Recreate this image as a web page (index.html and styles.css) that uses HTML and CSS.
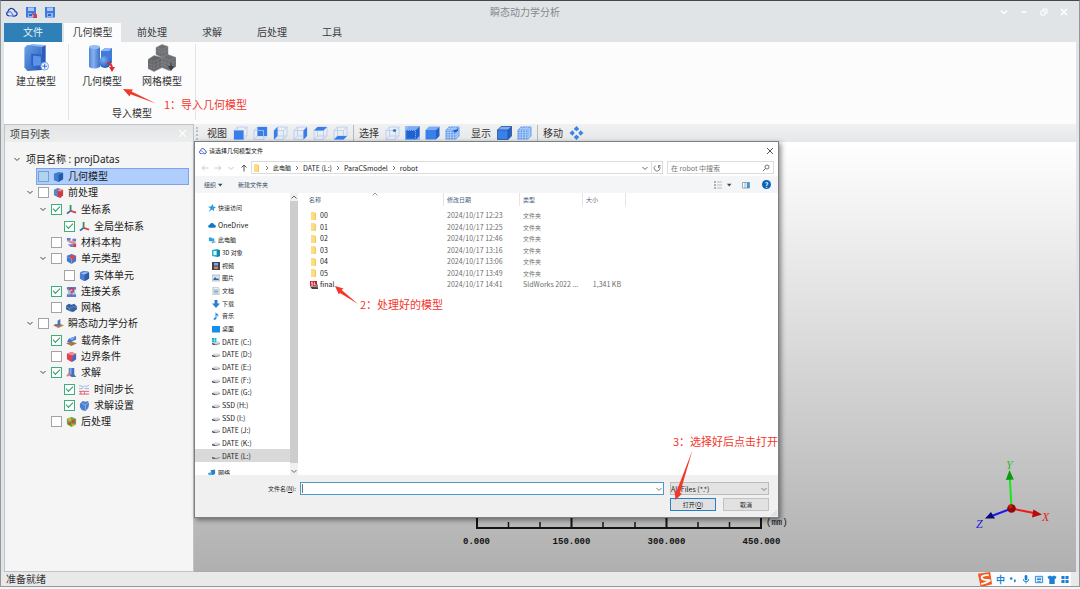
FILE: index.html
```html
<!DOCTYPE html>
<html lang="zh-CN">
<head>
<meta charset="utf-8">
<title>瞬态动力学分析</title>
<link rel="stylesheet" href="styles.css">
</head>
<body>
<svg class="sprite" aria-hidden="true">
  <defs>
    <linearGradient id="g-blue" x1="0" y1="0" x2="1" y2="1"><stop offset="0" stop-color="#6ea2ea"/><stop offset="1" stop-color="#2257b8"/></linearGradient>
    <linearGradient id="g-cyl" x1="0" x2="1" y1="0" y2="0"><stop offset="0" stop-color="#4d86dc"/><stop offset=".4" stop-color="#86b1f0"/><stop offset="1" stop-color="#3a70c8"/></linearGradient>
    <radialGradient id="g-ball" cx=".35" cy=".3" r=".8"><stop offset="0" stop-color="#7db0f5"/><stop offset="1" stop-color="#1c4fae"/></radialGradient>
  </defs>
  <symbol id="cloud" viewBox="0 0 12 11"><path d="M3 9.400C.2 9-.1 5.900 2 5.300 2.200 2.300 6 .6 8 3.200M6.500 9.500H8.800C11.800 9 11.800 5.500 9.200 5.200 9 4 8.500 3 7 2.600" fill="none" stroke="#2a3db0" stroke-width="1.300"/><path d="M2.500 6Q4.500 4 6 7T9 9M3 9.300H7" fill="none" stroke="#5b8bea" stroke-width="1.300"/></symbol>
  <symbol id="disk" viewBox="0 0 12 12"><path d="M1 1h10v10.500H1z" fill="#3f7bdc"/><path d="M3 1.500h6v3.500H3z" fill="#a9c8f6"/><path d="M3 7h6v4H3z" fill="#8db4f2"/><path d="M4 8h3v2H4z" fill="#2f66c6"/></symbol>
  <symbol id="disk-as" viewBox="0 0 12 12"><use href="#disk"/><path d="M7 7l4 4M11.300 8V11.300H8" fill="none" stroke="#e0353b" stroke-width="1.300"/></symbol>
  <symbol id="chev" viewBox="0 0 8 8"><path d="M1.500 3L4 5.500 6.500 3" fill="none" stroke="currentColor"/></symbol>
  <symbol id="chev-r" viewBox="0 0 8 8"><path d="M3 2L5 4 3 6" fill="none" stroke="currentColor" stroke-width=".9"/></symbol>
  <symbol id="chev-u" viewBox="0 0 8 8"><path d="M1.500 5.500L4 3 6.500 5.500" fill="none" stroke="currentColor"/></symbol>
  <symbol id="tri" viewBox="0 0 8 8"><path d="M2 2.800h4.500L4.200 5.500z" fill="currentColor"/></symbol>
  <symbol id="cross" viewBox="0 0 8 8"><path d="M1 1l6 6M7 1L1 7" fill="none" stroke="currentColor"/></symbol>
  <symbol id="build" viewBox="0 0 26 29"><path d="M3 2L9 0l13 1-4 3z" fill="#8db6f2"/><path d="M1 4L4 1l15 2v24L4 28 1 24z" fill="url(#g-blue)"/><path d="M19 3l4-2v21l-4 5z" fill="#2a5dbb"/><path d="M8 10l11 1v12l-9 1-2-3z" fill="#2c62c6"/><path d="M10 12l8 1v9l-8 1z" fill="#5b93e6"/><circle cx="22" cy="23" r="4" fill="#f3f8ff" stroke="#6c9be0"/><path d="M19.500 23h5M22 20.500v5" stroke="#2b66cf"/></symbol>
  <symbol id="geom" viewBox="0 0 26 28"><path d="M0 3v20q5 3 11 0V3z" fill="url(#g-cyl)"/><ellipse cx="5.500" cy="3" rx="5.500" ry="2" fill="#94bbf3"/><path d="M12 7l4-3h7v15l-3 2h-8z" fill="#3f7bda"/><path d="M12 7l4-3h7l-3 3z" fill="#8eb7f3"/><circle cx="16" cy="18" r="6" fill="url(#g-ball)"/><path d="M18 19q5 0 5 6" fill="none" stroke="#e02a32" stroke-width="2"/><path d="M20 23h6l-3 5z" fill="#e02a32"/></symbol>
  <symbol id="mesh" viewBox="0 0 28 27"><g stroke="#8b8d90" stroke-width=".5"><path d="M8 3l6-3 6 2v9l-6 2-6-3z" fill="#6b6d70"/><path d="M0 15l6-4 8 2v10l-8 4-6-3z" fill="#626467"/><path d="M14 13l6-3 8 3v9l-7 4-7-3z" fill="#6b6d70"/><path d="M8 3l6 2 6-3M14 5v8M0 15l6 2 8-4M6 17v10M14 13l7 3 7-3M21 16v10M11 4v8M17 4v8M8 6l6 2 6-2M3 16v9M10 15v10M0 19l6 2 8-4M0 22l6 2 8-4M17 15v9M24 15v9M14 17l7 3 7-3M14 20l7 3 7-3" fill="none"/></g><path d="M23 18v5M20.500 22h5L23 26z" fill="#3e4043" stroke="#3e4043"/></symbol>
  <symbol id="wire" viewBox="0 0 15 14"><path d="M1 4.500h9.500v9H1zM4.500 1h9.500v9H4.500zM1 4.500L4.500 1M10.500 4.500L14 1M10.500 13.500L14 10M1 13.500L4.500 10" fill="none" stroke="#b4cff6" stroke-width=".9"/></symbol>
  <symbol id="v-front" viewBox="0 0 15 14"><use href="#wire"/><path d="M1 4.500h9.500v9H1z" fill="#397de9"/></symbol>
  <symbol id="v-back" viewBox="0 0 15 14"><use href="#wire"/><path d="M4.500 1H14v9H4.500z" fill="#397de9"/><path d="M4.500 4.500h6V10" fill="none" stroke="#a9c8f6" stroke-width=".8"/></symbol>
  <symbol id="v-left" viewBox="0 0 15 14"><use href="#wire"/><path d="M1 4.500L4.500 1v9L1 13.500z" fill="#397de9"/></symbol>
  <symbol id="v-right" viewBox="0 0 15 14"><use href="#wire"/><path d="M10.500 4.500L14 1v9l-3.500 3.500z" fill="#397de9"/></symbol>
  <symbol id="v-top" viewBox="0 0 15 14"><use href="#wire"/><path d="M1 4.500L4.500 1H14l-3.500 3.500z" fill="#397de9"/></symbol>
  <symbol id="v-bottom" viewBox="0 0 15 14"><use href="#wire"/><path d="M1 13.500L4.500 10H14l-3.500 3.500z" fill="#397de9"/></symbol>
  <symbol id="s-point" viewBox="0 0 15 14"><use href="#wire"/><circle cx="9.500" cy="4.500" r="1.600" fill="#2f74e4"/></symbol>
  <symbol id="solid" viewBox="0 0 15 14"><path d="M.5 4L4 .5h10.500L11 4z" fill="#7daef5"/><path d="M.5 4H11v9.500H.5z" fill="#3b7fea"/><path d="M11 4L14.500.5V10L11 13.500z" fill="#2362cb"/></symbol>
  <symbol id="s-edge" viewBox="0 0 15 14"><use href="#solid"/><path d="M1 4.500h9.500V13H1z" fill="#1f62cf" stroke="#9cc3fa" stroke-width=".7" stroke-dasharray="1 1"/></symbol>
  <symbol id="s-body" viewBox="0 0 15 14"><use href="#solid"/><path d="M.5 4L4 .5h10.500V10L11 13.500H.5zM.5 4H11v9.500M11 4L14.500.5" fill="none" stroke="#235196" stroke-width=".8"/></symbol>
  <symbol id="s-mesh" viewBox="0 0 15 14"><path d="M.5 4L4 .5h10.500V10L11 13.500H.5z" fill="#5e98ef"/><path d="M.5 4H11v9.500M11 4L14.500.5M3 4v9.500M5.700 4v9.500M8.400 4v9.500M.5 6.400H11L14.500 3M.5 8.800H11l3.500-3.400M.5 11.200H11l3.500-3.400M2.500 2.300h10M3 4l3-3.500M6 4l3-3.500M8.500 4l3-3.500M12.700 2.300v9.500" fill="none" stroke="#d5e5fc" stroke-width=".6"/></symbol>
  <symbol id="s-cell" viewBox="0 0 15 14"><use href="#s-mesh"/><path d="M8.400 4H11v2.400H8.400z" fill="#1c5fd0"/><path d="M11 4l2-2v2.400l-2 2z" fill="#1c5fd0"/></symbol>
  <symbol id="move" viewBox="0 0 14 14"><g fill="#3b82ea"><path d="M7 0l2.800 3L7 5.200 4.200 3zM7 14l2.800-3L7 8.800 4.200 11zM0 7l3-2.800L5.200 7 3 9.800zM14 7l-3-2.800L8.800 7 11 9.800z"/></g></symbol>
  <symbol id="t-box" viewBox="0 0 12 12"><path d="M1 3l5-2 5 1v7l-5 3-5-2z" fill="#3f7fd0"/><path d="M6 4l5-2v7l-5 3z" fill="#245ba8"/></symbol>
  <symbol id="t-pre" viewBox="0 0 12 12"><path d="M1 3l4-2 3 1v8l-3 1-4-2z" fill="#5d85c9"/><path d="M5 4l6-1v6l-3 3-3-1z" fill="#d13a4a"/><path d="M5 4l3-2 3 1-3 2z" fill="#ee8f97"/></symbol>
  <symbol id="t-axis" viewBox="0 0 12 12"><path d="M5 7.500V1" stroke="#2c9c57" stroke-width="2"/><path d="M5 7.500l6 2" stroke="#d5434b" stroke-width="2"/><path d="M5 7.500L1 10.500" stroke="#3b65bc" stroke-width="2"/></symbol>
  <symbol id="t-mat" viewBox="0 0 12 12"><path d="M1 1h4v3H1zM7 2h4v3H7z" fill="#5d7fca"/><path d="M1 5l5-1 5 2-4 2z" fill="#e98b95"/><path d="M2 8h8v3H5z" fill="#5c88d6"/><path d="M8 7h3v4H8z" fill="#d13f50"/></symbol>
  <symbol id="t-elem" viewBox="0 0 12 12"><path d="M1 3l5-2 5 2v6l-5 3-5-3z" fill="#4579c8"/><path d="M4 3l4-1 2 3-4 4z" fill="#d94558"/><path d="M1 4l5 2v6" fill="none" stroke="#8fb5ec" stroke-width=".6"/></symbol>
  <symbol id="t-solid" viewBox="0 0 12 12"><path d="M1 4q0-3 5-3t5 2v6q-2 3-5 3t-5-3z" fill="#4c7fd2"/><path d="M6 4l5-1v6q-2 2-5 3z" fill="#2d5cab"/><path d="M2 4q4-3 8-1L6 5z" fill="#9abfee"/></symbol>
  <symbol id="t-link" viewBox="0 0 12 12"><path d="M1 1h10v3H1zM1 9h10v3H1z" fill="#567fc7"/><path d="M2 4h8v5H2z" fill="#a2b9e0"/><path d="M4 4.500q0-2 2-2t2 2-2 2V8M6 9v1" fill="none" stroke="#d2334a" stroke-width="1.500"/></symbol>
  <symbol id="t-net" viewBox="0 0 12 12"><path d="M0 4l3-2 3 1 3-1 3 3v3l-4 3-4-1-4-2z" fill="#35639f"/><path d="M0 5l4 2 4-2 4 1M4 7v3" fill="none" stroke="#86aadd" stroke-width=".6"/></symbol>
  <symbol id="t-dyn" viewBox="0 0 12 12"><path d="M0 8l6-2 6 2-6 3z" fill="#b7823e"/><path d="M5 8V3l3-2v6z" fill="#4774c0"/><path d="M2 7q2 2 6 0" fill="none" stroke="#4774c0" stroke-width="1.500"/></symbol>
  <symbol id="t-load" viewBox="0 0 12 12"><path d="M0 9l6-2 6 2-6 3z" fill="#a87938"/><path d="M1 8l2-4 8-3v4L5 8z" fill="#3d74cd"/><path d="M3 4l8-3-4 5z" fill="#7da8e8"/></symbol>
  <symbol id="t-bound" viewBox="0 0 12 12"><path d="M1 3l5-2 5 2v6l-5 3-5-3z" fill="#df4053"/><path d="M7 5l4-2v6l-4 3z" fill="#3e6dbd"/><path d="M1 3l5-2 5 2-4 2z" fill="#f08a95"/></symbol>
  <symbol id="t-solve" viewBox="0 0 12 12"><path d="M3 1h6v7l2 3H6L3 8z" fill="#466fbf"/><path d="M4 1h2v7H4z" fill="#8badde"/><path d="M0 10l3-4 2 4z" fill="#e2848e"/></symbol>
  <symbol id="t-time" viewBox="0 0 12 12"><path d="M0 2h3l1 2 2-2 2 1 3-2M0 5h4M6 5h5" fill="none" stroke="#8fabdf" stroke-width=".9"/><path d="M0 8h11M0 11h11M2 8v3M6 9v2" fill="none" stroke="#e0525e"/></symbol>
  <symbol id="t-set" viewBox="0 0 12 12"><path d="M1 4l3-3 3 1 3-1 1 4-1 4-3 3-4-1-2-3z" fill="#4a80cf"/><path d="M3 4l4 1 3-2M7 5v6" fill="none" stroke="#a4c4ef" stroke-width=".7"/></symbol>
  <symbol id="t-post" viewBox="0 0 12 12"><path d="M1 3l5-2 5 2v6l-5 3-5-3z" fill="#69a84a"/><circle cx="4" cy="4" r="1.700" fill="#e3b32f"/><circle cx="8" cy="6" r="2" fill="#d94536"/><circle cx="4" cy="8.500" r="1.600" fill="#d94536"/><circle cx="8" cy="10" r="1.200" fill="#e3b32f"/></symbol>
  <symbol id="folder" viewBox="0 0 8 8"><path d="M1 0h4v1h1v7H1z" fill="#fbdd86"/><path d="M4.800 1H6v7H4.800z" fill="#f2ca62"/></symbol>
  <symbol id="sldprt" viewBox="0 0 8 8"><path d="M0 0h7v5H0z" fill="#c3202b"/><path d="M3 1.200H1.500v1.500H3v1.500H1M4.500 1v3H6" fill="none" stroke="#fff" stroke-width=".7"/><path d="M0 5.500h8V8H2z" fill="#4b3a3d"/><path d="M5.500 3.500h2.500v3H5.500z" fill="#8a7a7c"/></symbol>
  <symbol id="star" viewBox="0 0 8 8"><path d="M4.500 0l.9 2.500L8 3.200 5.900 4.600 6 7.200 4 5.600.5 8 2.600 4.600 0 2.700l3-.1z" fill="#2d9be2"/></symbol>
  <symbol id="onedrive" viewBox="0 0 10 8"><path d="M2 7.500Q0 7 .2 5.500T2 3.800Q3 .8 5.500 1.500 7 1.800 7.500 3.500 10 3.800 9.800 6 9.500 7.500 8 7.500z" fill="#1277cc"/></symbol>
  <symbol id="pc" viewBox="0 0 9 8"><path d="M1 1l6 1v4L1 5z" fill="#2e9fe4"/><path d="M4 6.500l4-1 .5 1L5 8z" fill="#7aa8c8"/><path d="M1 1l6 1-1 1z" fill="#9bd7f8"/></symbol>
  <symbol id="obj3d" viewBox="0 0 8 8"><path d="M0 1l5-1 3 1v6L5 8 0 7z" fill="#2bb1cb"/><path d="M1.500 2h3v4h-3z" fill="#e4fbff"/><path d="M5 1h3v6L5 8z" fill="#1686a9"/></symbol>
  <symbol id="video" viewBox="0 0 8 8"><path d="M0 0h8v8H0z" fill="#3c4557"/><path d="M2 1h4v2.500H2z" fill="#7fa9e4"/><path d="M2 4.500h4V7H2z" fill="#c9894b"/></symbol>
  <symbol id="pic" viewBox="0 0 8 8"><path d="M0 1h8v6H0z" fill="#d9e4ef" stroke="#8fa3b6" stroke-width=".6"/><path d="M1 6l2-3 2 2 1-1 1 2z" fill="#2d6a9c"/></symbol>
  <symbol id="doc" viewBox="0 0 8 8"><path d="M1 0h4.500L7 1.500V8H1z" fill="#eef2f6" stroke="#8d9aa8" stroke-width=".6"/><path d="M2 3h4M2 4.500h4M2 6h4" stroke="#5687b8" stroke-width=".7"/></symbol>
  <symbol id="down" viewBox="0 0 8 8"><path d="M2.500 0h3v3.500H8L4 8 0 3.500h2.500z" fill="#2b7fd0"/></symbol>
  <symbol id="music" viewBox="0 0 8 8"><path d="M3.500 0q.5 1.500 2 2t.5 3Q6 3.500 4.500 3v3.500Q3.500 8.500 1.500 7.500 1.500 5.500 3.500 5.600z" fill="#2089dd"/></symbol>
  <symbol id="desk" viewBox="0 0 8 8"><path d="M0 1h8v6.500H0z" fill="#168fea"/></symbol>
  <symbol id="drive" viewBox="0 0 8 8"><path d="M0 5L2 3.500h5L8 5 4 6z" fill="#dadada"/><path d="M0 5l4 1L8 5v1L4 7.300 0 6.200z" fill="#909396"/><path d="M0 5.200l3 .8v1L0 6.200z" fill="#3a3d40"/></symbol>
  <symbol id="drive-c" viewBox="0 0 8 8"><use href="#drive"/><path d="M0 0h2v2H0zM2.400 0h2v2h-2zM0 2.300h2v2H0zM2.400 2.300h2v2h-2z" fill="#1fb0dd"/></symbol>
  <symbol id="net" viewBox="0 0 9 8"><path d="M3 1l5-1v5L4 7z" fill="#2c80c0"/><path d="M0 4l4-1 1 4-4 1z" fill="#43aee0"/></symbol>
  <symbol id="left" viewBox="0 0 8 8"><path d="M7.500 4H1M3.500 1.500L1 4l2.500 2.500" fill="none" stroke="currentColor" stroke-width=".9"/></symbol>
  <symbol id="right" viewBox="0 0 8 8"><path d="M.5 4H7M4.500 1.500L7 4 4.500 6.500" fill="none" stroke="currentColor" stroke-width=".9"/></symbol>
  <symbol id="up" viewBox="0 0 8 8"><path d="M4 7.500V1M1.500 3.500L4 1l2.500 2.500" fill="none" stroke="currentColor"/></symbol>
  <symbol id="reload" viewBox="0 0 8 8"><path d="M2.500 1.700A2.900 2.900 0 1 0 5.800 1.800M5.500 4V1.500H7.500" fill="none" stroke="currentColor" stroke-width=".8"/></symbol>
  <symbol id="find" viewBox="0 0 8 8"><circle cx="5" cy="3" r="2" fill="none" stroke="currentColor" stroke-width=".8"/><path d="M3.500 4.500L1 7" stroke="currentColor" stroke-width=".9"/></symbol>
</svg>

<div class="app">
  <header class="titlebar">
    <div class="quick">
      <svg><use href="#cloud"/></svg>
      <button aria-label="另存为"><svg><use href="#disk-as"/></svg></button>
      <button aria-label="保存"><svg><use href="#disk"/></svg></button>
    </div>
    <h1>瞬态动力学分析</h1>
    <div class="winbtns">
      <button aria-label="折叠"><svg viewBox="0 0 8 8"><path d="M1 2.500L4 5.500 7 2.500"/></svg></button>
      <button aria-label="最小化"><svg viewBox="0 0 8 8"><path d="M1.500 4h5"/></svg></button>
      <button aria-label="还原"><svg class="thin" viewBox="0 0 8 8"><path d="M1 3h4v4H1zM3 3V1h4v4H5"/></svg></button>
      <button aria-label="关闭"><svg viewBox="0 0 8 8"><path d="M1 1l6 6M7 1L1 7"/></svg></button>
    </div>
  </header>

  <nav class="tabs">
    <button class="tab file">文件</button>
    <button class="tab active">几何模型</button>
    <button class="tab">前处理</button>
    <button class="tab">求解</button>
    <button class="tab">后处理</button>
    <button class="tab">工具</button>
  </nav>

  <section class="ribbon">
    <div class="group">
      <div class="tools"><button class="big"><svg><use href="#build"/></svg>建立模型</button></div>
    </div>
    <div class="group">
      <div class="tools">
        <button class="big"><svg><use href="#geom"/></svg>几何模型</button>
        <button class="big"><svg><use href="#mesh"/></svg>网格模型</button>
      </div>
      <div class="caption">导入模型</div>
    </div>
  </section>

  <main class="workspace">
    <aside class="panel">
      <div class="panel-head"><h2>项目列表</h2><button aria-label="关闭面板"><svg><use href="#cross"/></svg></button></div>
      <ul class="tree">
        <li><div class="row root"><svg class="tw"><use href="#chev"/></svg><span>项目名称 : projDatas</span></div>
          <ul>
            <li><div class="row"><i class="tw"></i><label class="selected"><input type="checkbox"><svg><use href="#t-box"/></svg>几何模型</label></div></li>
            <li><div class="row"><svg class="tw"><use href="#chev"/></svg><label><input type="checkbox"><svg><use href="#t-pre"/></svg>前处理</label></div>
              <ul>
                <li><div class="row"><svg class="tw"><use href="#chev"/></svg><label><input type="checkbox" checked><svg><use href="#t-axis"/></svg>坐标系</label></div>
                  <ul><li><div class="row"><i class="tw"></i><label><input type="checkbox" checked><svg><use href="#t-axis"/></svg>全局坐标系</label></div></li></ul>
                </li>
                <li><div class="row"><i class="tw"></i><label><input type="checkbox"><svg><use href="#t-mat"/></svg>材料本构</label></div></li>
                <li><div class="row"><svg class="tw"><use href="#chev"/></svg><label><input type="checkbox"><svg><use href="#t-elem"/></svg>单元类型</label></div>
                  <ul><li><div class="row"><i class="tw"></i><label><input type="checkbox"><svg><use href="#t-solid"/></svg>实体单元</label></div></li></ul>
                </li>
                <li><div class="row"><i class="tw"></i><label><input type="checkbox" checked><svg><use href="#t-link"/></svg>连接关系</label></div></li>
                <li><div class="row"><i class="tw"></i><label><input type="checkbox"><svg><use href="#t-net"/></svg>网格</label></div></li>
              </ul>
            </li>
            <li><div class="row"><svg class="tw"><use href="#chev"/></svg><label><input type="checkbox"><svg><use href="#t-dyn"/></svg>瞬态动力学分析</label></div>
              <ul>
                <li><div class="row"><i class="tw"></i><label><input type="checkbox" checked><svg><use href="#t-load"/></svg>载荷条件</label></div></li>
                <li><div class="row"><i class="tw"></i><label><input type="checkbox"><svg><use href="#t-bound"/></svg>边界条件</label></div></li>
                <li><div class="row"><svg class="tw"><use href="#chev"/></svg><label><input type="checkbox" checked><svg><use href="#t-solve"/></svg>求解</label></div>
                  <ul>
                    <li><div class="row"><i class="tw"></i><label><input type="checkbox" checked><svg><use href="#t-time"/></svg>时间步长</label></div></li>
                    <li><div class="row"><i class="tw"></i><label><input type="checkbox" checked><svg><use href="#t-set"/></svg>求解设置</label></div></li>
                  </ul>
                </li>
                <li><div class="row"><i class="tw"></i><label><input type="checkbox"><svg><use href="#t-post"/></svg>后处理</label></div></li>
              </ul>
            </li>
          </ul>
        </li>
      </ul>
    </aside>

    <section class="view">
      <div class="viewbar">
        <div class="set"><span>视图</span>
          <button aria-label="前视"><svg><use href="#v-front"/></svg></button>
          <button aria-label="后视"><svg><use href="#v-back"/></svg></button>
          <button aria-label="左视"><svg><use href="#v-left"/></svg></button>
          <button aria-label="右视"><svg><use href="#v-right"/></svg></button>
          <button aria-label="俯视"><svg><use href="#v-top"/></svg></button>
          <button aria-label="仰视"><svg><use href="#v-bottom"/></svg></button>
        </div>
        <div class="set ruled"><span>选择</span>
          <button aria-label="选择点"><svg><use href="#s-point"/></svg></button>
          <button aria-label="选择线" class="on"><svg><use href="#s-edge"/></svg></button>
          <button aria-label="选择面"><svg><use href="#solid"/></svg></button>
          <button aria-label="选择单元"><svg><use href="#s-cell"/></svg></button>
        </div>
        <div class="set plain"><span>显示</span>
          <button aria-label="实体显示"><svg><use href="#s-body"/></svg></button>
          <button aria-label="网格显示"><svg><use href="#s-mesh"/></svg></button>
        </div>
        <div class="set ruled"><span>移动</span>
          <button aria-label="平移"><svg><use href="#move"/></svg></button>
        </div>
      </div>
      <div class="canvas">
        <div class="scale">
          <div class="ruler">
            <svg viewBox="0 0 286 14" preserveAspectRatio="none"><path d="M1 0v12h284V0M95.500 0v12M190.500 0v12" fill="none" stroke="#141414" stroke-width="2"/><path d="M32.500 6v6M64 6v6M127 6v6M159 6v6M222 6v6M253.500 6v6" stroke="#141414" stroke-width="1.500"/></svg>
            <span class="unit">(mm)</span>
          </div>
          <div class="marks"><span>0.000</span><span>150.000</span><span>300.000</span><span>450.000</span></div>
        </div>
        <svg class="triad" viewBox="975 456 78 76">
          <path d="M1011.500 508L1009.800 478" stroke="#17e81c" stroke-width="2"/><path d="M1009.500 470l4.300 9.500-8 .4z" fill="#0c9a12"/>
          <path d="M1011.500 508.500L1034 513" stroke="#f01818" stroke-width="2"/><path d="M1042 514.500l-10 3 1.400-8z" fill="#b80c0c"/>
          <path d="M1011.500 508.500L993 515.500" stroke="#1a1af0" stroke-width="2"/><path d="M985 518.500l6-6.500 4 6.500z" fill="#0a0a7a"/>
          <circle cx="1011.500" cy="508.500" r="4.300" fill="#8d0909"/><circle cx="1010.500" cy="506.500" r="2" fill="#d81212"/>
          <text x="1006" y="469" fill="#22c32a">Y</text><text x="1042" y="521" fill="#ea1c1c">X</text><text x="976" y="528" fill="#2020e0">Z</text>
        </svg>
      </div>
    </section>
  </main>

  <footer class="status"><span>准备就绪</span></footer>

  <div class="ime">
    <svg class="logo" viewBox="0 0 18 18"><path d="M2 3L15 1l2 13L5 17z" fill="#f25a22"/><path d="M13.500 4.500Q6 4 6 6.800t6.500 2.700T5.500 14" fill="none" stroke="#fff" stroke-width="2"/></svg>
    <span>中</span>
    <svg viewBox="0 0 10 10"><circle cx="3" cy="4" r="1.400"/><path d="M6 5h2v2L6.500 8.500z"/></svg>
    <svg viewBox="0 0 10 10"><rect x="3.500" y="0" width="3" height="6" rx="1.500"/><path d="M2 4.500Q2 7.500 5 7.500T8 4.500M5 7v2.500" fill="none" stroke="#1b7fd8"/></svg>
    <svg viewBox="0 0 10 10"><path d="M1 1.500h8v7H1zM2.500 3.500h5M2.500 5h5M3 7h4" fill="none" stroke="#1b7fd8"/></svg>
    <svg viewBox="0 0 10 10"><path d="M0 2l3-1.500q2 2 4 0L10 2 9 4.500 8 4v6H2V4l-1 .5z"/></svg>
    <svg viewBox="0 0 10 10"><path d="M1 1h3.500v3.500H1zM5.500 1H9v3.500H5.500zM1 5.500h3.500V9H1zM5.500 5.500H9V9H5.500z"/></svg>
  </div>

  <div class="dialog" role="dialog" aria-label="请选择几何模型文件">
    <div class="dlg-title"><svg><use href="#cloud"/></svg><h2>请选择几何模型文件</h2><button aria-label="关闭"><svg><use href="#cross"/></svg></button></div>
    <div class="address">
      <div class="hist">
        <button disabled aria-label="后退"><svg><use href="#left"/></svg></button>
        <button disabled aria-label="前进"><svg><use href="#right"/></svg></button>
        <button disabled aria-label="历史"><svg><use href="#chev"/></svg></button>
        <button aria-label="上一级"><svg><use href="#up"/></svg></button>
      </div>
      <div class="path">
        <svg><use href="#folder"/></svg><svg><use href="#chev-r"/></svg><a class="zh" href="#pc">此电脑</a><svg><use href="#chev-r"/></svg><a href="#l">DATE (L:)</a><svg><use href="#chev-r"/></svg><a href="#m">ParaCSmodel</a><svg><use href="#chev-r"/></svg><a href="#r">robot</a>
        <button class="drop" aria-label="展开"><svg><use href="#chev"/></svg></button><button class="reload" aria-label="刷新"><svg><use href="#reload"/></svg></button>
      </div>
      <label class="search"><input type="text" placeholder="在 robot 中搜索" aria-label="搜索"><svg><use href="#find"/></svg></label>
    </div>
    <div class="cmds">
      <button>组织<svg><use href="#tri"/></svg></button><button>新建文件夹</button>
      <div class="opts">
        <button aria-label="视图"><svg viewBox="0 0 8 8"><path d="M0 1h2M0 4h2M0 7h2" stroke="#9a9a9a" stroke-width="1.500"/><path d="M3 1h5M3 4h5M3 7h5" stroke="#b9bcc0"/></svg></button>
        <button aria-label="更多视图"><svg><use href="#tri"/></svg></button>
        <button class="pane" aria-label="预览窗格"><svg viewBox="0 0 8 8"><path d="M.5 1.500h7v5.500h-7zM3 1.500V7" fill="#fff" stroke="#7f93a8" stroke-width=".8"/><path d="M4.800 1.500h2.700V7H4.800z" fill="#3b95db"/></svg></button>
        <button class="help" aria-label="帮助">?</button>
      </div>
    </div>
    <div class="browse">
      <div class="places">
        <ul class="pins">
          <li class="zh"><svg><use href="#star"/></svg>快速访问</li>
          <li><svg><use href="#onedrive"/></svg>OneDrive</li>
        </ul>
        <ul class="drives">
          <li class="top zh"><svg><use href="#pc"/></svg>此电脑</li>
          <li class="zh"><svg><use href="#obj3d"/></svg>3D 对象</li>
          <li class="zh"><svg><use href="#video"/></svg>视频</li>
          <li class="zh"><svg><use href="#pic"/></svg>图片</li>
          <li class="zh"><svg><use href="#doc"/></svg>文档</li>
          <li class="zh"><svg><use href="#down"/></svg>下载</li>
          <li class="zh"><svg><use href="#music"/></svg>音乐</li>
          <li class="zh"><svg><use href="#desk"/></svg>桌面</li>
          <li><svg><use href="#drive-c"/></svg>DATE (C:)</li>
          <li><svg><use href="#drive"/></svg>DATE (D:)</li>
          <li><svg><use href="#drive"/></svg>DATE (E:)</li>
          <li><svg><use href="#drive"/></svg>DATE (F:)</li>
          <li><svg><use href="#drive"/></svg>DATE (G:)</li>
          <li><svg><use href="#drive"/></svg>SSD (H:)</li>
          <li><svg><use href="#drive"/></svg>SSD (I:)</li>
          <li><svg><use href="#drive"/></svg>DATE (J:)</li>
          <li><svg><use href="#drive"/></svg>DATE (K:)</li>
          <li class="here"><svg><use href="#drive"/></svg>DATE (L:)</li>
        </ul>
        <ul class="pins"><li class="zh"><svg><use href="#net"/></svg>网络</li></ul>
      </div>
      <div class="bar"><svg><use href="#chev-u"/></svg><div class="thumb"></div><svg><use href="#chev"/></svg></div>
      <div class="files">
        <table>
          <colgroup><col class="c-name"><col class="c-date"><col class="c-type"><col class="c-size"><col></colgroup>
          <thead><tr><th class="sorted">名称<svg><use href="#chev-u"/></svg></th><th>修改日期</th><th>类型</th><th>大小</th><th class="rest"></th></tr></thead>
          <tbody>
            <tr><td><svg><use href="#folder"/></svg>00</td><td>2024/10/17 12:23</td><td class="zh">文件夹</td><td></td><td></td></tr>
            <tr><td><svg><use href="#folder"/></svg>01</td><td>2024/10/17 12:25</td><td class="zh">文件夹</td><td></td><td></td></tr>
            <tr><td><svg><use href="#folder"/></svg>02</td><td>2024/10/17 12:46</td><td class="zh">文件夹</td><td></td><td></td></tr>
            <tr><td><svg><use href="#folder"/></svg>03</td><td>2024/10/17 13:16</td><td class="zh">文件夹</td><td></td><td></td></tr>
            <tr><td><svg><use href="#folder"/></svg>04</td><td>2024/10/17 13:06</td><td class="zh">文件夹</td><td></td><td></td></tr>
            <tr><td><svg><use href="#folder"/></svg>05</td><td>2024/10/17 13:49</td><td class="zh">文件夹</td><td></td><td></td></tr>
            <tr><td><svg><use href="#sldprt"/></svg>final</td><td>2024/10/17 14:41</td><td>SldWorks 2022 ...</td><td>1,341 KB</td><td></td></tr>
          </tbody>
        </table>
      </div>
    </div>
    <div class="dlg-foot">
      <label class="name-label" for="fname">文件名(<u>N</u>):</label>
      <div class="combo"><input id="fname" type="text"><svg><use href="#chev"/></svg></div>
      <div class="filter"><select aria-label="文件类型"><option>All Files (*.*)</option></select><svg><use href="#chev"/></svg></div>
      <div class="actions"><button class="primary">打开(<u>O</u>)</button><button>取消</button></div>
    </div>
    <svg class="grip" viewBox="0 0 6 6"><path d="M4.500 1h1M2.500 3h1M4.500 3h1M.5 5h1M2.500 5h1M4.500 5h1" stroke="#b4b4b4"/></svg>
  </div>

  <div class="note n1"><svg viewBox="0 0 33 16"><path d="M0 1l10 .5-1.500 2L33 15.500 7.500 6.300 6.500 8.500z"/></svg><p>1：导入几何模型</p></div>
  <div class="note n2"><svg viewBox="0 0 23 19"><path d="M0 1l8.500 2.500-1.800 1.500L23 19 5 8 3.800 9.500z"/></svg><p>2：处理好的模型</p></div>
  <div class="note n3"><p>3：选择好后点击打开</p><svg viewBox="0 0 20 52"><path d="M19.500 0L7 43l2 .8L2.500 50 1.500 41l2 .6z"/></svg></div>
</div>
</body>
</html>
```
FILE: styles.css
```css
* { box-sizing: border-box; }
body { margin: 0; background: #f5f5f5; color: #222; font: 10px/16px "Noto Sans", "Noto Sans CJK SC", sans-serif; }
button { margin: 0; padding: 0; border: 0; background: none; color: inherit; font: inherit; }
h1, h2, p { margin: 0; font: inherit; }
ul { margin: 0; padding: 0; list-style: none; }
svg { display: block; flex: none; }
.sprite { position: absolute; width: 0; height: 0; }

.app { position: relative; display: flex; flex-direction: column; height: calc(100vh - 2px); overflow: hidden; background: #e1e4e7; border: 1px solid #94979b; border-top-color: #44464c; }

.titlebar { display: flex; align-items: center; height: 22px; padding: 0 11px 0 5px; }
.quick { display: flex; gap: 7px; }
.quick svg { width: 12px; height: 12px; }
.titlebar h1 { flex: 1; padding-right: 6px; text-align: center; color: #85888c; }
.winbtns { display: flex; gap: 12px; }
.winbtns svg { width: 8px; height: 8px; fill: none; stroke: #fff; stroke-width: 1.500; }
.winbtns .thin { stroke-width: 1; }

.tabs { display: flex; gap: 2px; padding-left: 3px; line-height: 18px; }
.tab { width: 58px; height: 19px; padding-bottom: 1px; color: #3a3a3a; }
.tab.file { background: #2f80b7; color: #e8f3fa; }
.tab.active { width: 57px; background: #fcfcfc; }

.ribbon { display: flex; height: 82px; margin: 0 3px; padding: 2px 0 4px; background: #fcfcfc; }
.group { display: flex; flex-direction: column; justify-content: space-between; padding: 0 2px; border-right: 1px solid #e3e4e6; }
.group + .group { padding: 0 3px; }
.tools { display: flex; }
.big { display: flex; flex-direction: column; align-items: center; gap: 1px; width: 60px; color: #333; }
.big svg { width: 28px; height: 28px; }
.caption { text-align: center; color: #333; line-height: 14px; }

.workspace { flex: 1; display: flex; min-height: 0; margin: 0 3px; }
.panel { flex: none; width: 190px; background: #f5f5f5; border: 1px solid #c0c3c7; }
.panel-head { display: flex; justify-content: space-between; align-items: center; height: 17px; padding: 0 6px 0 5px; background: linear-gradient(#e3e5e7, #eceded); color: #444; }
.panel-head svg { width: 9px; height: 9px; color: #fff; }
.tree { padding: 9px 4px 0 8px; color: #1a1a1a; }
.tree ul { padding: 1px 0 0 13px; }
.row { display: flex; align-items: center; gap: 2px; height: 16px; }
.row.root { gap: 5px; }
.tw { flex: none; width: 8px; height: 8px; color: #444; }
.row label { flex: 1; display: flex; align-items: center; gap: 4px; height: 17px; border: 1px solid transparent; padding-left: 1px; white-space: nowrap; }
.row label svg { width: 11px; height: 11px; }
.row .selected { background: #b0cefd; border-color: #7ba5e8; }
.row input { appearance: none; flex: none; width: 11px; height: 11px; margin: 0; background: #fff; border: 1px solid #a3a3a3; }
.row .selected input { background: #b0d3f2; border-color: #7f9fc2; }
.row input:checked { display: grid; place-items: center; border-color: #3fae7c; }
.row input:checked::after { content: ""; width: 6px; height: 3px; margin-bottom: 2px; border: solid #1f9e63; border-width: 0 0 1px 1px; transform: rotate(-45deg); }

.view { flex: 1; display: flex; flex-direction: column; min-width: 0; }
.viewbar { display: flex; align-items: center; height: 18px; padding-left: 2px; background: linear-gradient(#f1f1f2, #e6e7e8); color: #333; }
.viewbar::before { content: ""; width: 2px; height: 13px; border-left: 2px dotted #bcbec1; }
.set { display: flex; align-items: center; gap: 5px; padding-left: 7px; white-space: nowrap; }
.set span { margin-right: 1px; }
.set svg { width: 15px; height: 14px; }
.set .on { background: #92bdf6; }
.set.ruled { margin-left: 5px; padding-left: 5px; border-left: 1px solid #b8babd; }
.set.plain { padding-left: 11px; }
.canvas { flex: 1; position: relative; background: linear-gradient(#fff, #b0b0b0); border-bottom: 1px solid #a8aaad; }
.scale { position: absolute; left: 235px; bottom: 22px; width: 380px; color: #111; font: bold 9px/14px "Liberation Mono", monospace; }
.ruler { display: flex; align-items: center; margin: 0 -25px 5px 47px; }
.ruler svg { width: 286px; height: 14px; }
.unit { margin-left: 4px; font-weight: normal; }
.marks { display: grid; grid-template-columns: repeat(4, 1fr); text-align: center; }
.triad { position: absolute; right: 23px; bottom: 39px; width: 78px; height: 76px; font: italic 12px "Liberation Serif", serif; }

.status { height: 14px; line-height: 14px; padding-left: 5px; background: #e9e9e9; color: #333; }
.ime { position: absolute; right: 8px; bottom: -1px; display: flex; align-items: center; gap: 3px; height: 15px; padding: 0 1px; background: linear-gradient(90deg, transparent 12px, #fbfcfd 12px); color: #1b7fd8; font-weight: bold; font-size: 9px; line-height: 12px; }
.ime svg { width: 10px; height: 9px; fill: #1b7fd8; }
.ime .logo { width: 17px; height: 17px; }

.dialog { position: absolute; left: 193px; top: 140px; width: 585px; background: #fff; border: 1px solid #7d8083; box-shadow: 2px 2px 5px rgba(0, 0, 0, .45); color: #222; font: 7px/10px "Noto Sans CJK SC", sans-serif; }
.zh { font-size: 6px; }
.dialog svg { width: 8px; height: 8px; }
.dlg-title { display: flex; align-items: center; gap: 2px; height: 17px; padding: 0 4px; color: #111; font-size: 6px; }
.dlg-title h2 { flex: 1; }
.dlg-title button { color: #555; }
.address { display: flex; align-items: center; gap: 4px; height: 17px; padding: 0 4px 0 6px; }
.hist { display: flex; gap: 5px; width: 46px; color: #555; }
.hist button:disabled { color: #c4c6c9; }
.path { flex: 1; display: flex; align-items: center; gap: 2px; height: 13px; padding-left: 1px; border: 1px solid #dcdcdc; color: #666; }
.path a { color: #222; text-decoration: none; }
.drop { margin-left: auto; }
.reload { display: grid; place-items: center; width: 11px; height: 11px; border-left: 1px solid #e1e1e1; }
.search { display: flex; align-items: center; width: 107px; height: 13px; padding: 0 3px; border: 1px solid #dcdcdc; color: #555; }
.search input { flex: 1; min-width: 0; padding: 0; border: 0; outline: 0; font: inherit; }
.search input::placeholder { color: #777; }
.cmds { display: flex; align-items: center; gap: 14px; height: 17px; padding: 0 7px 0 9px; background: #f4f5f6; color: #33475f; font-size: 6px; }
.cmds button { display: flex; align-items: center; }
.opts { display: flex; align-items: center; gap: 3px; margin-left: auto; }
.pane { margin: 0 9px 0 6px; }
.cmds .help { justify-content: center; width: 9px; height: 9px; border-radius: 50%; background: #0a63b8; color: #fff; font-size: 7px; font-weight: bold; }
.browse { display: flex; height: 282px; }
.places { width: 95px; overflow: hidden; padding-top: 6px; }
.places li { display: flex; align-items: center; gap: 2px; padding-left: 17px; }
.places .pins li { height: 17px; padding-left: 13px; }
.drives { display: grid; grid-auto-rows: 1fr; height: 228px; }
.places .top { padding-left: 13px; }
.pins + .drives { margin-top: 1px; }
.drives + .pins { margin-top: 2px; }
.here { background: #d9d9d9; }
.bar { display: flex; flex-direction: column; width: 8px; background: #f0f0f0; color: #666; }
.thumb { flex: 1; background: #cdcdcd; margin-bottom: 4px; }
.files { flex: 1; min-width: 0; color: #777; }
.files table { width: 100%; table-layout: fixed; border-collapse: separate; border-spacing: 0; }
.c-name { width: 146px; }
.c-date { width: 76px; }
.c-type { width: 63px; }
.c-size { width: 43px; }
th { position: relative; height: 13px; padding: 0 3px; border-right: 1px solid #e5e5e5; color: #4c607a; font-size: 6px; font-weight: normal; text-align: left; }
th:first-child { padding-left: 11px; }
th.rest { border: 0; }
.sorted svg { position: absolute; left: 73px; top: -3px; color: #999; }
tbody::before { content: ""; display: block; height: 4px; }
td { height: 11px; padding: 0 3px; color: #6e6e6e; line-height: 11px; white-space: nowrap; }
td:first-child { display: flex; align-items: center; gap: 2px; padding-left: 12px; color: #222; }
td:nth-child(4) { padding-right: 5px; text-align: right; }
tbody tr:nth-child(even) td { height: 12px; }
.dlg-foot { display: grid; grid-template-columns: 101px 1fr 99px; align-items: center; gap: 3px 4px; padding: 7px 9px 6px 0; background: #f0f0f0; }
.name-label { font-size: 6px; text-align: right; }
.combo { display: flex; align-items: center; height: 13px; margin-right: 2px; background: #fff; border: 1px solid #4a9bcd; }
.combo input { flex: 1; min-width: 0; height: 9px; margin-left: 1px; padding: 0; border: 0; border-left: 1px solid #777; outline: 0; font: inherit; }
.combo svg, .filter svg { color: #777; }
.filter { display: flex; align-items: center; height: 13px; background: #e3e3e3; border: 1px solid #bcbcbc; }
.filter select { appearance: none; flex: 1; padding: 0; border: 0; background: none; font: inherit; color: #222; }
.actions { grid-column: 3; display: grid; grid-template-columns: 1fr 1fr; gap: 7px; }
.actions button { height: 13px; background: #e1e1e1; border: 1px solid #c2c2c2; font-size: 6px; line-height: 10px; }
.actions .primary { border-color: #2382cc; }
.dialog .grip { position: absolute; right: 1px; bottom: 1px; width: 6px; height: 6px; }

.note { position: absolute; display: flex; color: #f5372b; font-size: 11px; line-height: 14px; white-space: nowrap; pointer-events: none; font-family: "Noto Sans CJK SC", sans-serif; }
.note svg { fill: #f5372b; }
.n1 { left: 122px; top: 87px; gap: 8px; }
.n1 svg { width: 33px; height: 16px; }
.n1 p { padding-top: 9px; }
.n2 { left: 334px; top: 284px; gap: 2px; }
.n2 svg { width: 23px; height: 19px; }
.n2 p { padding-top: 12px; }
.n3 { left: 672px; top: 433px; flex-direction: column; gap: 2px; }
.n3 svg { width: 20px; height: 52px; }
```
